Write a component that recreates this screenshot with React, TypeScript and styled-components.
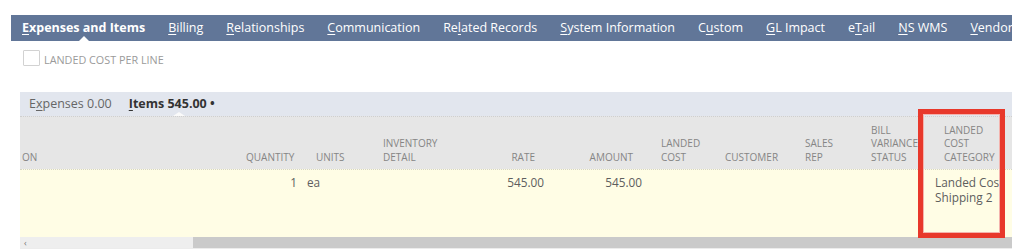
import styled, { createGlobalStyle } from "styled-components";

const GlobalStyle = createGlobalStyle`
  body {
    margin: 0;
    background: #ffffff;
    font-family: "Open Sans", "DejaVu Sans", sans-serif;
  }
`;

const Page = styled.div`
  width: 1024px;
  height: 252px;
  padding-top: 15px;
  box-sizing: border-box;
  overflow: hidden;
`;

const TabBar = styled.div`
  display: flex;
  gap: 23px;
  margin-left: 11px;
  width: 1001px;
  height: 26px;
  padding-left: 11px;
  box-sizing: border-box;
  background: #617698;
  align-items: center;
  overflow: hidden;
  white-space: nowrap;
`;

const Tab = styled.div<{ $active?: boolean }>`
  position: relative;
  height: 26px;
  line-height: 26px;
  color: #ffffff;
  font-size: 12.5px;
  font-weight: ${({ $active }) => ($active ? 700 : 400)};

  &::after {
    content: "";
    display: ${({ $active }) => ($active ? "block" : "none")};
    position: absolute;
    left: 50%;
    bottom: 0;
    margin-left: -5px;
    border-left: 5px solid transparent;
    border-right: 5px solid transparent;
    border-bottom: 5px solid #ffffff;
  }
`;

const Key = styled.span`
  text-decoration: underline;
  text-underline-offset: 2px;
`;

const CheckRow = styled.div`
  display: flex;
  align-items: flex-end;
  gap: 4px;
  margin: 9px 0 0 23px;
  height: 16px;
`;

const Checkbox = styled.div`
  width: 15px;
  height: 14px;
  border: 1px solid #d2d2d2;
  border-radius: 1px;
  background: #ffffff;
`;

const CheckLabel = styled.span`
  font-size: 10.8px;
  color: #9a9a9a;
  line-height: 12px;
`;

const Section = styled.div`
  position: relative;
  margin: 26px 0 0 20px;
  width: 992px;
`;

const SubTabBar = styled.div`
  display: flex;
  gap: 17px;
  height: 24px;
  padding-left: 9px;
  background: #e2e6ee;
  align-items: center;
`;

const SubTab = styled.div<{ $active?: boolean }>`
  position: relative;
  height: 24px;
  line-height: 24px;
  font-size: 12.5px;
  color: ${({ $active }) => ($active ? "#333333" : "#666666")};
  font-weight: ${({ $active }) => ($active ? 700 : 400)};

  &::after {
    content: "";
    display: ${({ $active }) => ($active ? "block" : "none")};
    position: absolute;
    left: 44px;
    bottom: 0;
    border-left: 6px solid transparent;
    border-right: 6px solid transparent;
    border-bottom: 4px solid #fafafa;
  }
`;

const Grid = styled.div`
  overflow: hidden;
`;

const Row = styled.div<{ $head?: boolean }>`
  display: grid;
  grid-template-columns: 212px 70px 67px 100px 80px 98px 64px 80px 66px 73px 110px;
  width: 1020px;
  height: ${({ $head }) => ($head ? "53px" : "68px")};
  box-sizing: border-box;
  background: ${({ $head }) => ($head ? "#e6e6e6" : "#fffde5")};
  border-top: 1px dotted ${({ $head }) => ($head ? "#cfcfcf" : "#d6d6c6")};
`;

const HeadCell = styled.div<{ $right?: boolean; $flush?: boolean }>`
  display: flex;
  flex-direction: column;
  justify-content: flex-end;
  padding: 0 14px 5px ${({ $flush }) => ($flush ? "2px" : "14px")};
  text-align: ${({ $right }) => ($right ? "right" : "left")};
  font-size: 10px;
  line-height: 13.5px;
  color: #858585;
  text-transform: uppercase;
  white-space: nowrap;
`;

const Cell = styled.div<{ $right?: boolean }>`
  padding: 5px 5px;
  text-align: ${({ $right }) => ($right ? "right" : "left")};
  font-size: 11.8px;
  line-height: 15px;
  color: #5e5e5e;
`;

const Scrollbar = styled.div`
  display: flex;
  height: 11px;
  border-bottom: 1px solid #ececec;
`;

const Track = styled.div`
  display: flex;
  align-items: center;
  width: 173px;
  padding-left: 4px;
  box-sizing: border-box;
  background: #eeeeee;
  font-size: 9px;
  color: #777777;
`;

const Thumb = styled.div`
  flex: 1;
  background: #cacaca;
`;

const Callout = styled.div`
  position: absolute;
  left: 898px;
  top: 17px;
  width: 87px;
  height: 129px;
  box-sizing: border-box;
  border: 5px solid #e8382b;
  box-shadow: inset 0 0 0 1px #f4b3ad;
  pointer-events: none;
`;

const tabs: [string, string, string][] = [
  ["", "E", "xpenses and Items"],
  ["", "B", "illing"],
  ["", "R", "elationships"],
  ["", "C", "ommunication"],
  ["Re", "l", "ated Records"],
  ["", "S", "ystem Information"],
  ["C", "u", "stom"],
  ["", "G", "L Impact"],
  ["e", "T", "ail"],
  ["", "N", "S WMS"],
  ["", "V", "endor Bills"],
];

const columns: { lines: string[]; right?: boolean; flush?: boolean }[] = [
  { lines: ["on"], flush: true },
  { lines: ["quantity"], right: true },
  { lines: ["units"] },
  { lines: ["inventory", "detail"] },
  { lines: ["rate"], right: true },
  { lines: ["amount"], right: true },
  { lines: ["landed", "cost"] },
  { lines: ["customer"] },
  { lines: ["sales", "rep"] },
  { lines: ["bill", "variance", "status"] },
  { lines: ["landed", "cost", "category"] },
];

const values: { text: string; right?: boolean }[] = [
  { text: "" },
  { text: "1", right: true },
  { text: "ea" },
  { text: "" },
  { text: "545.00", right: true },
  { text: "545.00", right: true },
  { text: "" },
  { text: "" },
  { text: "" },
  { text: "" },
  { text: "Landed Cost Shipping 2" },
];

export default function App() {
  return (
    <Page>
      <GlobalStyle />
      <TabBar>
        {tabs.map(([pre, key, post], i) => (
          <Tab key={i} $active={i === 0}>
            {pre}
            <Key>{key}</Key>
            {post}
          </Tab>
        ))}
      </TabBar>

      <CheckRow>
        <Checkbox />
        <CheckLabel>LANDED COST PER LINE</CheckLabel>
      </CheckRow>

      <Section>
        <SubTabBar>
          <SubTab>
            E<Key>x</Key>penses 0.00
          </SubTab>
          <SubTab $active>
            <Key>I</Key>tems 545.00 •
          </SubTab>
        </SubTabBar>

        <Grid>
          <Row $head>
            {columns.map((c, i) => (
              <HeadCell key={i} $right={c.right} $flush={c.flush}>
                {c.lines.map((l) => (
                  <div key={l}>{l}</div>
                ))}
              </HeadCell>
            ))}
          </Row>
          <Row>
            {values.map((v, i) => (
              <Cell key={i} $right={v.right}>
                {v.text}
              </Cell>
            ))}
          </Row>
        </Grid>

        <Scrollbar>
          <Track>‹</Track>
          <Thumb />
        </Scrollbar>

        <Callout />
      </Section>
    </Page>
  );
}
